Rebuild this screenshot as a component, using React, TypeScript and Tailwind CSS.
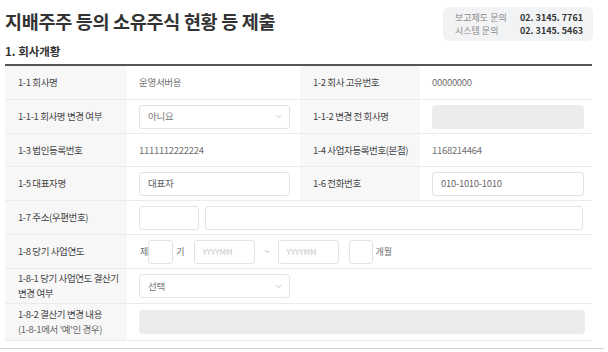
import { ChevronDown } from 'lucide-react';

const font = { fontFamily: '"Noto Sans CJK KR", "Noto Sans", sans-serif' };

function Label({ children }: { children: React.ReactNode }) {
  return (
    <div className="flex items-center bg-[#f7f7f7] pl-[13px] text-[9.5px] leading-[15px] tracking-[-0.4px] text-[#444]">
      {children}
    </div>
  );
}

function Cell({ children }: { children?: React.ReactNode }) {
  return (
    <div className="flex items-center gap-[6px] pl-[12px] pr-[7px] text-[9.5px] tracking-[-0.3px] text-[#707070]">
      {children}
    </div>
  );
}

function Select({ value }: { value: string }) {
  return (
    <div className="flex h-[24px] w-[151px] items-center justify-between rounded-[3px] border border-[#e3e3e3] bg-white pl-[8px] pr-[6px] text-[9.5px] text-[#777]">
      <span>{value}</span>
      <ChevronDown className="h-[9px] w-[9px] text-[#999]" strokeWidth={1.5} />
    </div>
  );
}

function Input({ w, value, placeholder, disabled }: { w: string; value?: string; placeholder?: string; disabled?: boolean }) {
  return (
    <div
      className={`flex h-[24px] shrink-0 items-center rounded-[3px] border px-[8px] ${w} ${
        disabled ? 'border-[#ececec] bg-[#ececec]' : 'border-[#e3e3e3] bg-white'
      } ${placeholder ? 'text-[8px] text-[#c8c8c8]' : 'text-[9.5px] text-[#666]'}`}
    >
      {value ?? placeholder}
    </div>
  );
}

const row4 = 'grid grid-cols-[122px_173px_120px_172px] border-b border-[#ebebeb]';
const row2 = 'grid grid-cols-[122px_465px] border-b border-[#ebebeb]';

export default function App() {
  return (
    <div className="h-[352px] w-[608px] overflow-hidden bg-white" style={font}>
      <div className="flex items-start justify-between pl-[5px] pr-[15px] pt-[7px]">
        <div>
          <h1 className="mt-[2px] text-[18.5px] font-bold leading-[24px] tracking-[-0.3px] text-[#333]">
            지배주주 등의 소유주식 현황 등 제출
          </h1>
          <h2 className="mt-[10px] text-[11.5px] font-bold leading-[16px] text-[#333]">1. 회사개황</h2>
        </div>
        <div className="grid h-[34px] w-[150px] grid-cols-[65px_1fr] content-center rounded-[6px] bg-[#f2f3f5] pl-[12px] text-[9px] leading-[13px]">
          <span className="text-[#888]">보고제도 문의</span>
          <span className="font-semibold text-[#333]">02. 3145. 7761</span>
          <span className="text-[#888]">시스템 문의</span>
          <span className="font-semibold text-[#333]">02. 3145. 5463</span>
        </div>
      </div>

      <div className="mx-[5px] mt-[5px] w-[587px] border-t-2 border-[#555]">
        <div className={`${row4} h-[34px]`}>
          <Label>1-1 회사명</Label>
          <Cell>운영서버용</Cell>
          <Label>1-2 회사 고유번호</Label>
          <Cell>00000000</Cell>
        </div>
        <div className={`${row4} h-[34px]`}>
          <Label>1-1-1 회사명 변경 여부</Label>
          <Cell><Select value="아니요" /></Cell>
          <Label>1-1-2 변경 전 회사명</Label>
          <Cell><Input w="w-[152px]" disabled /></Cell>
        </div>
        <div className={`${row4} h-[33px]`}>
          <Label>1-3 법인등록번호</Label>
          <Cell>1111112222224</Cell>
          <Label>1-4 사업자등록번호(본점)</Label>
          <Cell>1168214464</Cell>
        </div>
        <div className={`${row4} h-[34px]`}>
          <Label>1-5 대표자명</Label>
          <Cell><Input w="w-[151px]" value="대표자" /></Cell>
          <Label>1-6 전화번호</Label>
          <Cell><Input w="w-[152px]" value="010-1010-1010" /></Cell>
        </div>
        <div className={`${row2} h-[34px]`}>
          <Label>1-7 주소(우편번호)</Label>
          <Cell>
            <Input w="w-[60px]" value="" />
            <Input w="w-[378px]" value="" />
          </Cell>
        </div>
        <div className={`${row2} h-[34px]`}>
          <Label>1-8 당기 사업연도</Label>
          <div className="flex items-center pl-[13px] text-[9px] font-normal text-[#707070]">
            <span>제</span>
            <div className="ml-[0px] h-[24px] w-[25px] rounded-[3px] border border-[#e3e3e3]" />
            <span className="ml-[3px]">기</span>
            <div className="ml-[9px]"><Input w="w-[61px]" placeholder="YYYYMM" /></div>
            <span className="ml-[10px] text-[#aaa]">~</span>
            <div className="ml-[8px]"><Input w="w-[61px]" placeholder="YYYYMM" /></div>
            <div className="ml-[10px] h-[24px] w-[24px] rounded-[3px] border border-[#e3e3e3]" />
            <span className="ml-[3px]">개월</span>
          </div>
        </div>
        <div className={`${row2} h-[35px]`}>
          <Label>
            <span>
              1-8-1 당기 사업연도 결산기
              <br />
              변경 여부
            </span>
          </Label>
          <Cell><Select value="선택" /></Cell>
        </div>
        <div className={`${row2} h-[37px]`}>
          <Label>
            <span>
              1-8-2 결산기 변경 내용
              <br />
              <span className="text-[#666]">(1-8-1에서 '예'인 경우)</span>
            </span>
          </Label>
          <Cell><Input w="w-[446px]" disabled /></Cell>
        </div>
      </div>
      <div className="mt-[7px] w-[604px] border-t border-[#cfcfcf]" />
    </div>
  );
}
